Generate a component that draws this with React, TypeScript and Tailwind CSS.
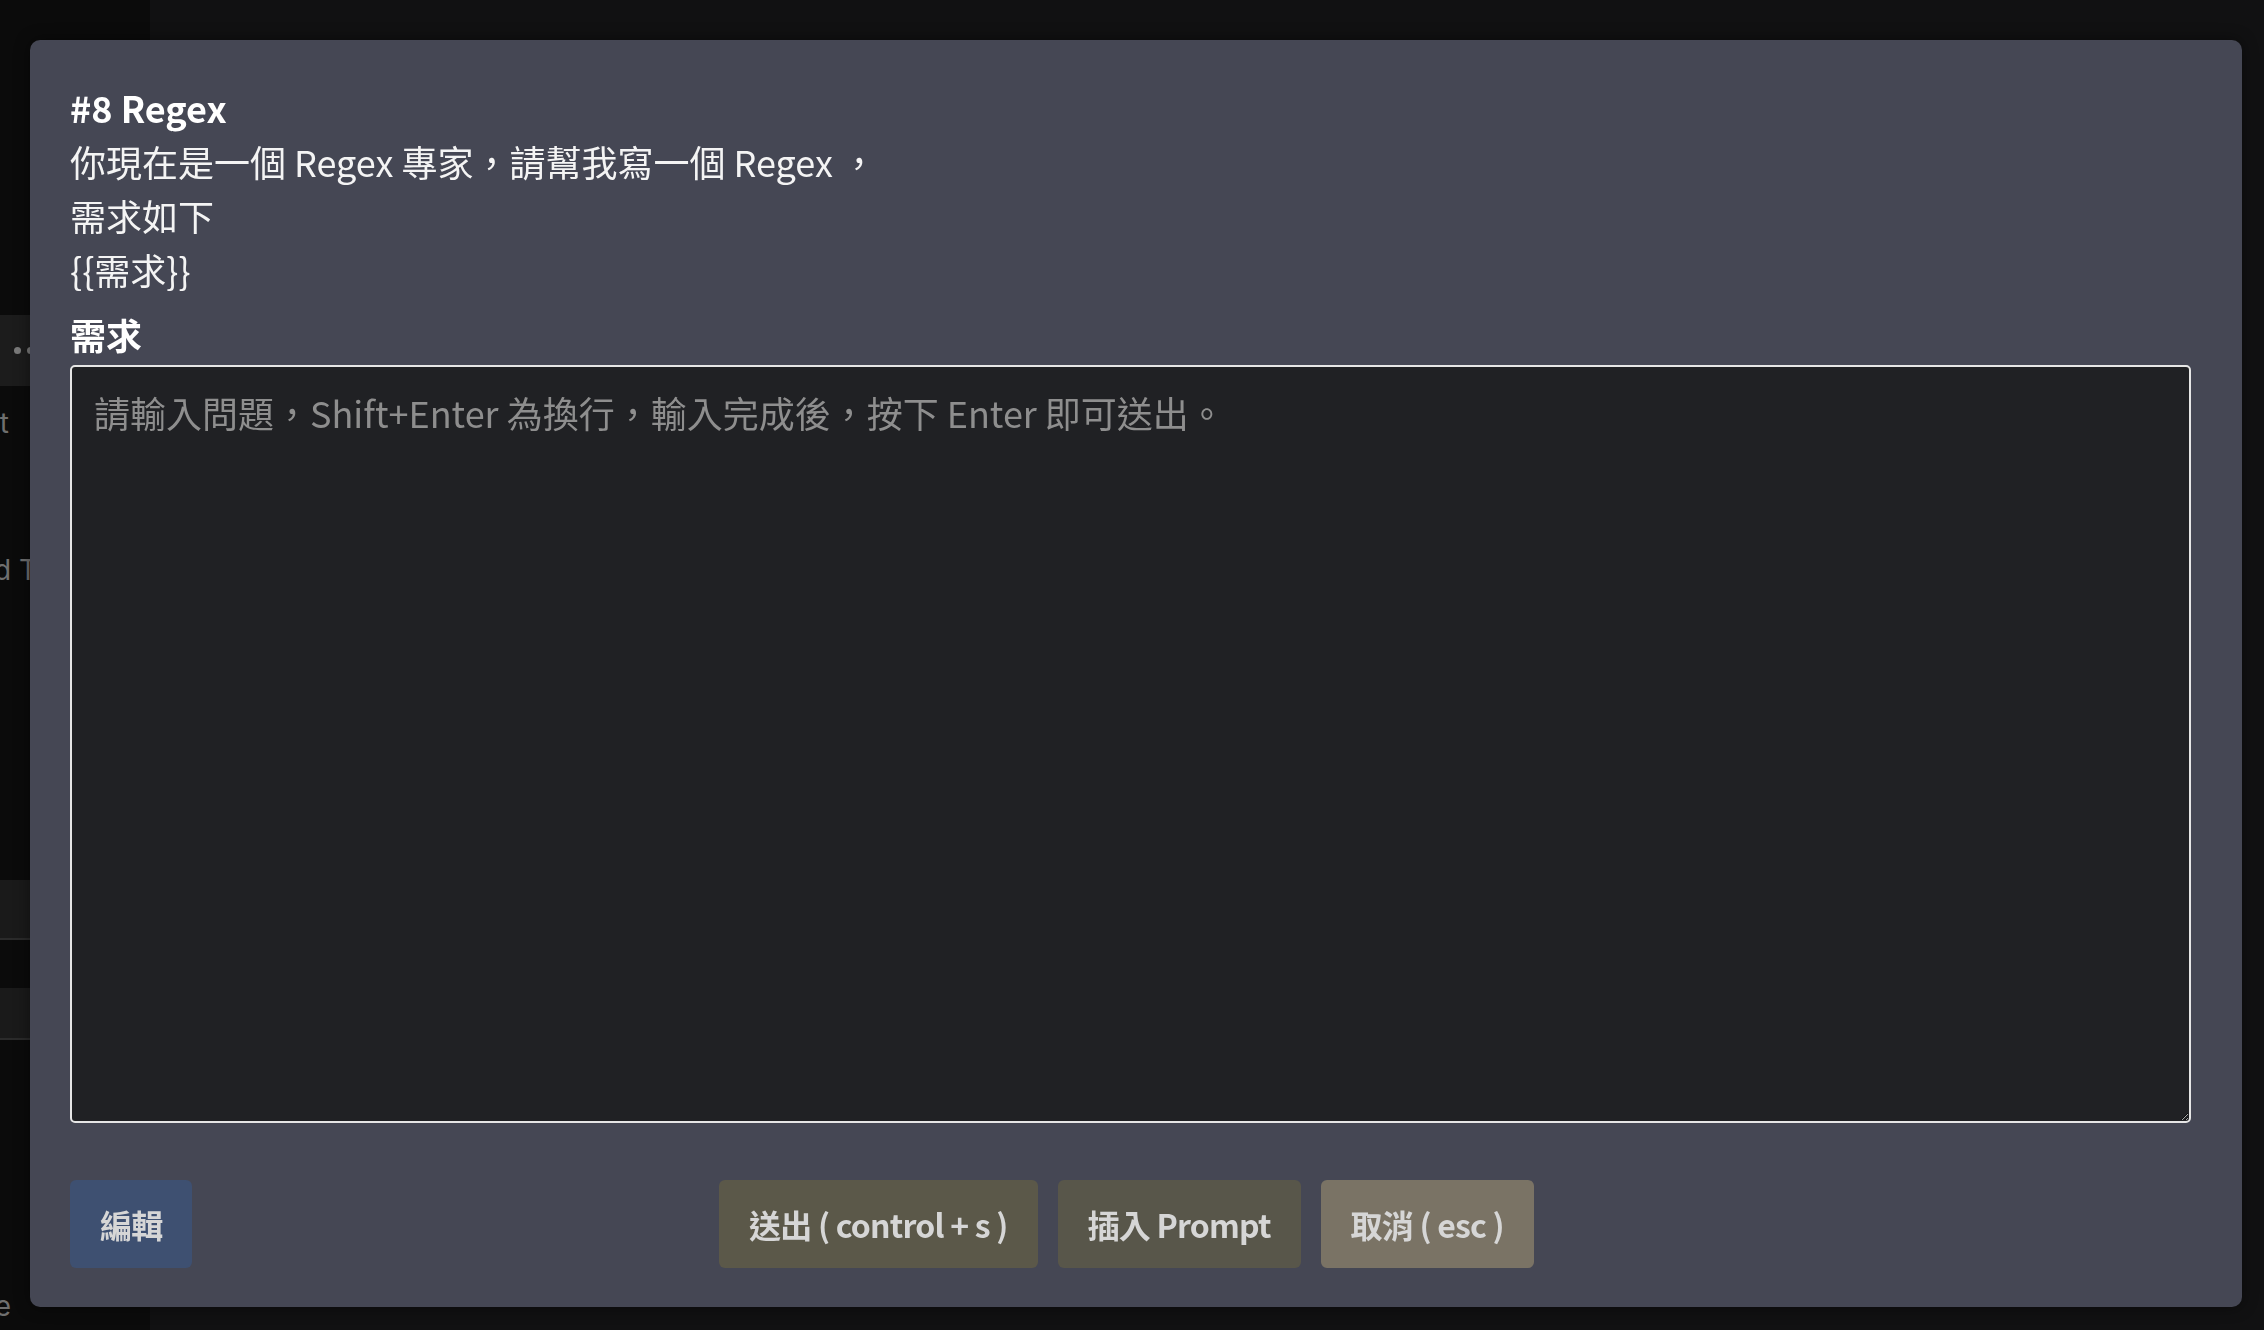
import React from 'react';

const cjk = { fontFamily: '"Noto Sans CJK TC", "Noto Sans", sans-serif' };

function Sidebar() {
  return (
    <aside className="w-[150px] h-full shrink-0 bg-[#0b0b0b] overflow-hidden text-[28px] text-[#6f6f6f]" style={{ fontFamily: 'Inter, sans-serif' }}>
      <div className="h-[315px]" />
      <div className="h-[71px] bg-[#1c1c1c] flex items-center pl-[14px] gap-[6px]">
        <span className="w-[7px] h-[7px] rounded-full bg-[#7a7a7a]" />
        <span className="w-[7px] h-[7px] rounded-full bg-[#7a7a7a]" />
        <span className="w-[7px] h-[7px] rounded-full bg-[#7a7a7a]" />
      </div>
      <div className="mt-[17px] h-[40px] w-[9px] flex items-center justify-end whitespace-nowrap">New Chat</div>
      <div className="mt-[107px] h-[40px] w-[37px] flex items-center justify-end whitespace-nowrap">Saved T</div>
      <div className="mt-[290px] h-[60px] bg-[#1a1a1a] border-b-2 border-[#2b2b2b]" />
      <div className="mt-[48px] h-[52px] bg-[#1a1a1a] border-b-2 border-[#2b2b2b]" />
      <div className="mt-[246px] h-[40px] w-[11px] flex items-center justify-end whitespace-nowrap">Theme</div>
    </aside>
  );
}

function PromptModal() {
  return (
    <div
      className="fixed left-[30px] top-[40px] w-[2212px] h-[1267px] rounded-[10px] bg-[#454754] shadow-[0_0_16px_rgba(0,0,0,0.45)] pt-10 pb-[39px] pl-10 pr-[51px] flex flex-col text-[36px] leading-[54px] text-[#f4f4f4]"
      style={cjk}
    >
      <div className="font-bold text-white">#8 Regex</div>
      <div>你現在是一個 Regex 專家，請幫我寫一個 Regex ，</div>
      <div>需求如下</div>
      <div>{'{{需求}}'}</div>
      <label className="mt-[11px] mb-[4px] font-bold text-white">需求</label>
      <textarea
        className="h-[758px] w-full shrink-0 rounded-[5px] border-2 border-[#e6e6e6] bg-[#202124] px-[22px] py-[18px] text-[36px] leading-[54px] text-white placeholder:text-[#8e8e8e] outline-none"
        style={cjk}
        placeholder="請輸入問題，Shift+Enter 為換行，輸入完成後，按下 Enter 即可送出。"
      />
      <div className="mt-auto grid grid-cols-[1fr_auto_1fr] items-center text-[32px] leading-[48px] font-bold tracking-[-0.8px] text-[#d6d6d6]">
        <div>
          <button className="rounded-md bg-[#3e5071] px-[30px] py-5">編輯</button>
        </div>
        <div className="flex gap-5 -ml-2">
          <button className="rounded-md bg-[#5b5849] px-[30px] py-5 whitespace-pre">送出 ( control + s )</button>
          <button className="rounded-md bg-[#58564a] px-[30px] py-5 whitespace-pre">插入 Prompt</button>
          <button className="rounded-md bg-[#7a7365] px-[30px] py-5 whitespace-pre">取消 ( esc )</button>
        </div>
        <div />
      </div>
    </div>
  );
}

export default function App() {
  return (
    <div className="h-[1330px] w-full flex bg-[#111112] overflow-hidden">
      <Sidebar />
      <main className="flex-1" />
      <PromptModal />
    </div>
  );
}
